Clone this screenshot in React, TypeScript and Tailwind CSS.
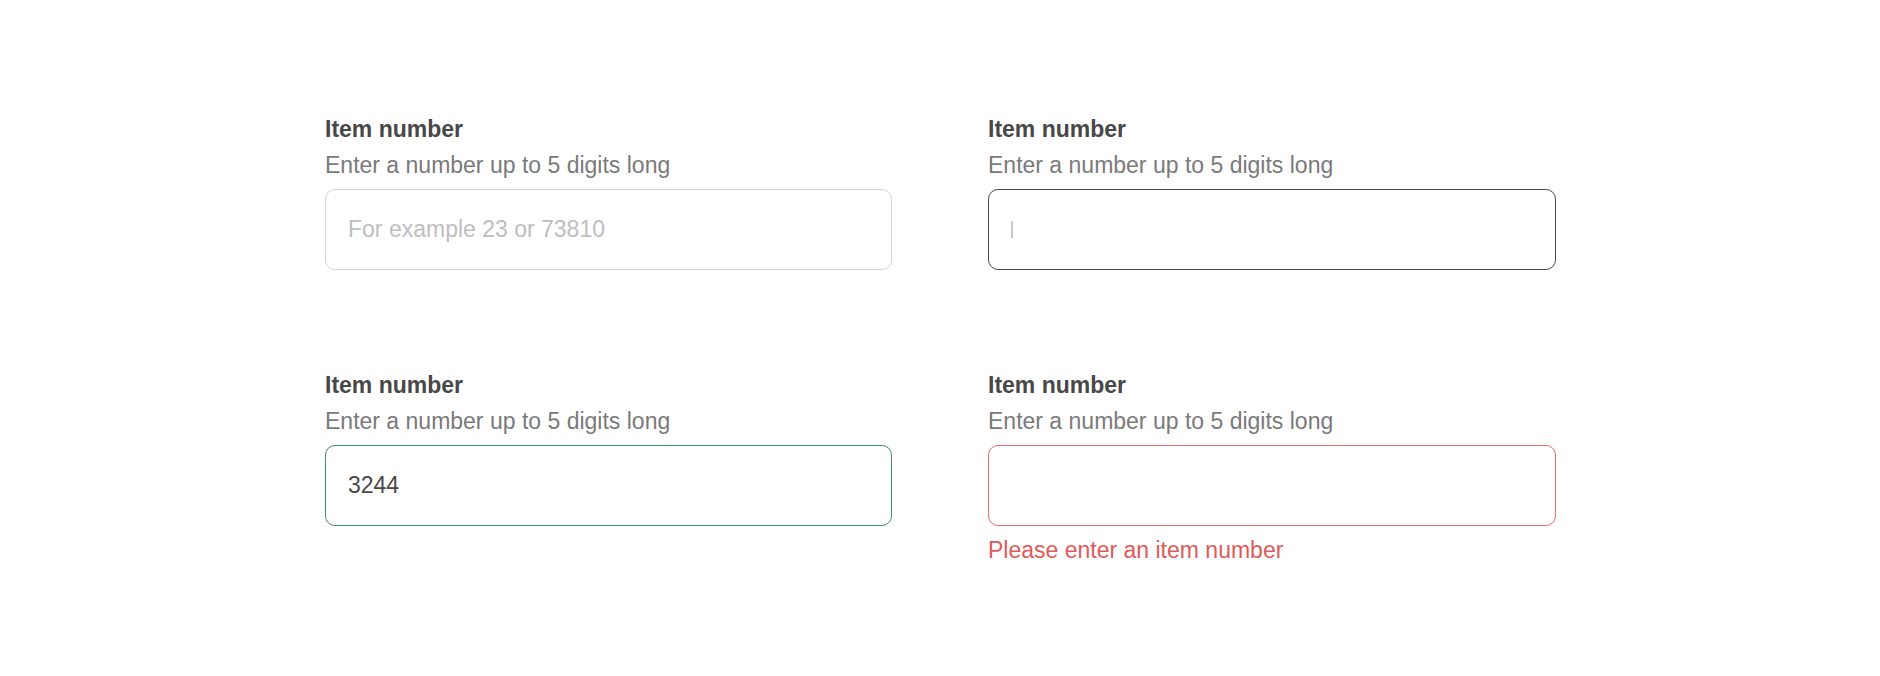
import React from 'react'

type State = 'default' | 'focus' | 'valid' | 'error'

const borders: Record<State, string> = {
  default: 'border-[#d4d4d4]',
  focus: 'border-[#4a4a4a]',
  valid: 'border-[#3f8f6b]',
  error: 'border-[#e86a6a]',
}

function Field({ state, value, placeholder }: { state: State; value?: string; placeholder?: string }) {
  return (
    <div className="flex flex-col">
      <label className="text-[23px] leading-[33px] font-bold text-[#484848]">Item number</label>
      <p className="mt-[3px] text-[23px] leading-[33px] text-[#7a7a7a]">Enter a number up to 5 digits long</p>
      <div className={`mt-[7px] h-[81px] rounded-[10px] border bg-white flex items-center px-[22px] ${borders[state]}`}>
        {state === 'focus' && <span className="w-[2px] h-[17px] bg-[#c8c8cc]" />}
        {placeholder && !value && <span className="text-[23px] text-[#bdbdc2]">{placeholder}</span>}
        {value && <span className="text-[23px] text-[#484848]">{value}</span>}
      </div>
      {state === 'error' && (
        <p className="mt-[8px] text-[23px] leading-[33px] text-[#e05a5a]">Please enter an item number</p>
      )}
    </div>
  )
}

export default function App() {
  return (
    <main className="min-h-[676px] bg-white pt-[113px] pl-[325px]" style={{ fontFamily: '"Liberation Sans", Arial, sans-serif' }}>
      <div className="grid grid-cols-[567px_568px] gap-x-[96px] gap-y-[99px] items-start">
        <Field state="default" placeholder="For example 23 or 73810" />
        <Field state="focus" />
        <Field state="valid" value="3244" />
        <Field state="error" />
      </div>
    </main>
  )
}
